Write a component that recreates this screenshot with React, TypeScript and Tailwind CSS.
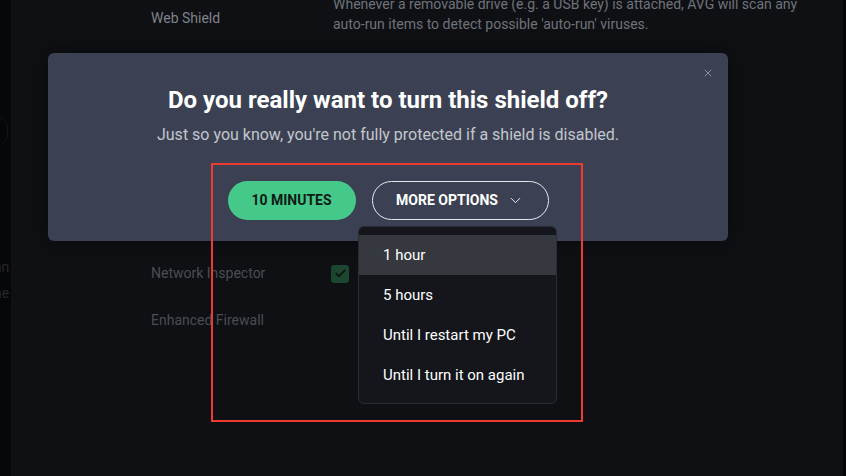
import { X, ChevronDown, Check } from "lucide-react";

const options = ["1 hour", "5 hours", "Until I restart my PC", "Until I turn it on again"];

export default function App() {
  return (
    <div className="relative flex h-[476px] w-[846px] overflow-hidden bg-[#0e1014] font-['Roboto',sans-serif]">
      {/* left app strip, mostly cut off */}
      <div className="relative w-[11px] shrink-0 overflow-hidden bg-[#060709]">
        <div className="absolute left-[-16px] top-[116px] h-[30px] w-[24px] rounded-full border border-[#0b1a12]" />
        <div className="absolute left-[-12px] top-[222px] text-[14px] font-bold text-[#2a1a1a]">Fi</div>
        <div className="absolute left-[-6px] top-[257px] text-[14px] text-[#25272b]">an</div>
        <div className="absolute left-[-6px] top-[283px] text-[14px] text-[#25272b]">ne</div>
      </div>

      {/* settings list behind the dialog */}
      <div className="flex flex-1 flex-col border-r-[3px] border-[#050607] pl-[140px] text-[14px]">
        <div className="mt-[-6px] grid grid-cols-[182px_1fr]">
          <div className="pt-[14px] text-[#80838a]">Web Shield</div>
          <div className="leading-[20px] text-[#6f737a]">
            Whenever a removable drive (e.g. a USB key) is attached, AVG will scan any
            <br />
            auto-run items to detect possible 'auto-run' viruses.
          </div>
        </div>
        <div className="mt-[16px] grid grid-cols-[182px_1fr]">
          <div />
          <div className="text-[#6f737a]">Anti-Spam</div>
        </div>
        <div className="mt-[192px] grid grid-cols-[180px_1fr] items-center">
          <div className="text-[#4a4d53]">Network Inspector</div>
          <div className="flex h-[18px] w-[18px] items-center justify-center rounded-[3px] bg-[#1c4630]">
            <Check className="h-[13px] w-[13px] text-[#0a0c0e]" strokeWidth={3} />
          </div>
        </div>
        <div className="mt-[26px] text-[#4a4d53]">Enhanced Firewall</div>
      </div>

      {/* dialog */}
      <div className="absolute left-[48px] top-[53px] flex h-[188px] w-[680px] flex-col items-center rounded-[6px] bg-[#3b4152] shadow-[0_0_20px_rgba(0,0,0,0.4)]">
        <X className="absolute right-[14px] top-[14px] h-[12px] w-[12px] text-[#a4a8b3]" strokeWidth={1.5} />
        <h1 className="mt-[32px] text-[24px] font-bold leading-[30px] text-white">
          Do you really want to turn this shield off?
        </h1>
        <p className="mt-[10px] text-[16px] leading-[20px] text-[#c3c6ce]">
          Just so you know, you're not fully protected if a shield is disabled.
        </p>
        <div className="mt-[36px] flex gap-[16px]">
          <button className="h-[39px] w-[128px] rounded-full bg-[#45c98a] text-[14px] font-bold text-[#0f1a15]">
            10 MINUTES
          </button>
          <button className="flex h-[39px] w-[177px] items-center justify-center gap-[9px] rounded-full border border-[#e8e9ec] text-[14px] font-bold text-white">
            MORE OPTIONS
            <ChevronDown className="h-[17px] w-[17px]" strokeWidth={1.25} />
          </button>
        </div>
      </div>

      {/* dropdown */}
      <div className="absolute left-[358px] top-[226px] w-[199px] rounded-[6px] border border-[#2a2d33] bg-[#14161b] py-[8px]">
        {options.map((o, i) => (
          <div
            key={o}
            className={`flex h-[40px] items-center pl-[24px] text-[15px] text-white ${i === 0 ? "bg-[#35383e]" : ""}`}
          >
            {o}
          </div>
        ))}
      </div>

      {/* annotation */}
      <div className="pointer-events-none absolute left-[211px] top-[163px] h-[259px] w-[372px] border-2 border-[#ee3b2f]" />
    </div>
  );
}
